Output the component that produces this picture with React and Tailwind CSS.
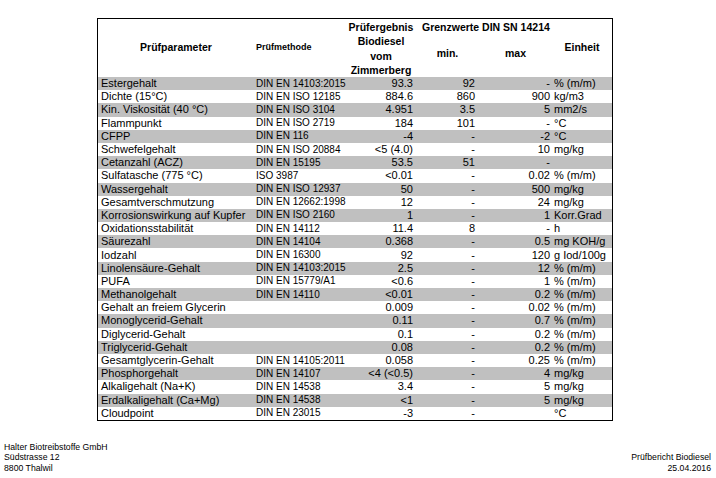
import React from "react";

// [parameter, method, result, min, max, unit]
const rows = [
  ["Estergehalt", "DIN EN 14103:2015", "93.3", "92", "-", "% (m/m)"],
  ["Dichte (15°C)", "DIN EN ISO 12185", "884.6", "860", "900", "kg/m3"],
  ["Kin. Viskosität (40 °C)", "DIN EN ISO 3104", "4.951", "3.5", "5", "mm2/s"],
  ["Flammpunkt", "DIN EN ISO 2719", "184", "101", "-", "°C"],
  ["CFPP", "DIN EN 116", "-4", "-", "-2", "°C"],
  ["Schwefelgehalt", "DIN EN ISO 20884", "<5 (4.0)", "-", "10", "mg/kg"],
  ["Cetanzahl (ACZ)", "DIN EN 15195", "53.5", "51", "-", ""],
  ["Sulfatasche (775 °C)", "ISO 3987", "<0.01", "-", "0.02", "% (m/m)"],
  ["Wassergehalt", "DIN EN ISO 12937", "50", "-", "500", "mg/kg"],
  ["Gesamtverschmutzung", "DIN EN 12662:1998", "12", "-", "24", "mg/kg"],
  ["Korrosionswirkung auf Kupfer", "DIN EN ISO 2160", "1", "-", "1", "Korr.Grad"],
  ["Oxidationsstabilität", "DIN EN 14112", "11.4", "8", "-", "h"],
  ["Säurezahl", "DIN EN 14104", "0.368", "-", "0.5", "mg KOH/g"],
  ["Iodzahl", "DIN EN 16300", "92", "-", "120", "g Iod/100g"],
  ["Linolensäure-Gehalt", "DIN EN 14103:2015", "2.5", "-", "12", "% (m/m)"],
  ["PUFA", "DIN EN 15779/A1", "<0.6", "-", "1", "% (m/m)"],
  ["Methanolgehalt", "DIN EN 14110", "<0.01", "-", "0.2", "% (m/m)"],
  ["Gehalt an freiem Glycerin", "", "0.009", "-", "0.02", "% (m/m)"],
  ["Monoglycerid-Gehalt", "", "0.11", "-", "0.7", "% (m/m)"],
  ["Diglycerid-Gehalt", "", "0.1", "-", "0.2", "% (m/m)"],
  ["Triglycerid-Gehalt", "", "0.08", "-", "0.2", "% (m/m)"],
  ["Gesamtglycerin-Gehalt", "DIN EN 14105:2011", "0.058", "-", "0.25", "% (m/m)"],
  ["Phosphorgehalt", "DIN EN 14107", "<4 (<0.5)", "-", "4", "mg/kg"],
  ["Alkaligehalt (Na+K)", "DIN EN 14538", "3.4", "-", "5", "mg/kg"],
  ["Erdalkaligehalt (Ca+Mg)", "DIN EN 14538", "<1", "-", "5", "mg/kg"],
  ["Cloudpoint", "DIN EN 23015", "-3", "-", "", "°C"],
];

const cols = "grid grid-cols-[156px_92px_70px_63px_73px_60px]";
const narrow = "font-['Liberation_Sans_Narrow','Arial_Narrow',sans-serif]";

export default function App() {
  return (
    <div className="flex h-[478px] w-[716px] flex-col bg-white font-['Liberation_Sans',Arial,sans-serif] text-black">
      {/* Tabelle */}
      <div className="ml-[97px] mt-[18px] w-[516px] border border-black">
        <div className={`${cols} h-[58px] grid-rows-[18px_1fr] text-[10.5px] font-bold`}>
          <div className="row-span-2 flex items-center justify-center">Prüfparameter</div>
          <div className={`row-span-2 flex items-center pl-[2px] text-[9px] ${narrow}`}>
            Prüfmethode
          </div>
          <div className="row-span-2 pt-px text-center leading-[14.4px]">
            Prüfergebnis
            <br />
            Biodiesel
            <br />
            vom
            <br />
            Zimmerberg
          </div>
          <div className="col-span-2 whitespace-nowrap pl-[6px] pt-px leading-[14px]">
            Grenzwerte DIN SN 14214
          </div>
          <div className="row-span-2 flex items-center justify-center">Einheit</div>
          <div className="flex items-center justify-center pb-[6px]">min.</div>
          <div className="flex items-center justify-center pb-[6px]">max</div>
        </div>

        <div className="flex h-[343px] flex-col">
          {rows.map((r, i) => (
            <div
              key={i}
              className={`${cols} flex-1 items-center text-[11px] leading-none ${
                i % 2 === 0 ? "bg-[#c0c0c0]" : "bg-white"
              }`}
            >
              <div className="whitespace-nowrap pl-[3px]">{r[0]}</div>
              <div className={`whitespace-nowrap pl-[2px] text-[10px] ${narrow}`}>{r[1]}</div>
              <div className="whitespace-nowrap pr-[3px] text-right">{r[2]}</div>
              <div className="pr-[4px] text-right">{r[3]}</div>
              <div className="pr-[2px] text-right">{r[4]}</div>
              <div className="whitespace-nowrap pl-[2px]">{r[5]}</div>
            </div>
          ))}
        </div>
      </div>

      {/* Fusszeile */}
      <div className="mt-auto flex items-end justify-between pb-[5px] pl-[4px] pr-[5px] text-[8.7px] leading-[10.5px]">
        <div>
          Halter Biotreibstoffe GmbH
          <br />
          Südstrasse 12
          <br />
          8800 Thalwil
        </div>
        <div className="text-right">
          Prüfbericht Biodiesel
          <br />
          25.04.2016
        </div>
      </div>
    </div>
  );
}
